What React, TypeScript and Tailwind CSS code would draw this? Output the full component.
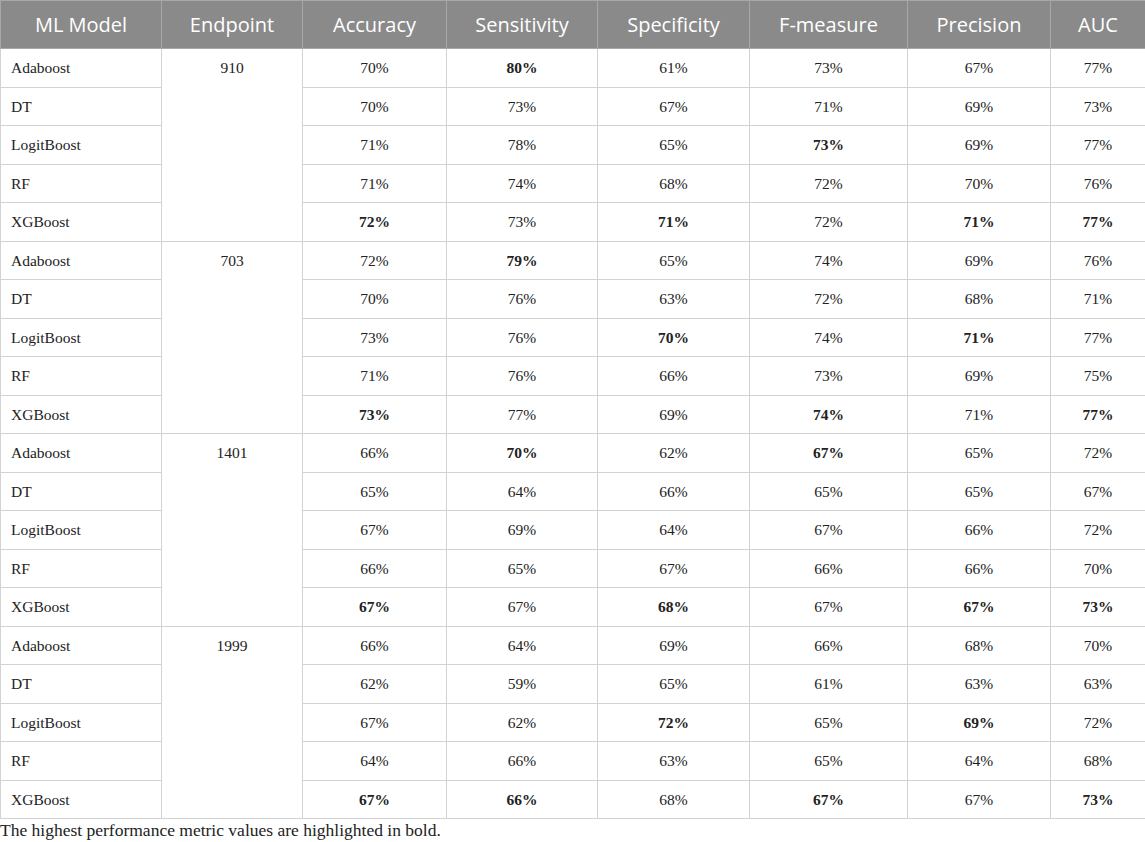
type Row = { model: string; vals: string[]; bold: number[] };

const groups: { endpoint: string; rows: Row[] }[] = [
  {
    endpoint: "910",
    rows: [
      { model: "Adaboost", vals: ["70%", "80%", "61%", "73%", "67%", "77%"], bold: [1] },
      { model: "DT", vals: ["70%", "73%", "67%", "71%", "69%", "73%"], bold: [] },
      { model: "LogitBoost", vals: ["71%", "78%", "65%", "73%", "69%", "77%"], bold: [3] },
      { model: "RF", vals: ["71%", "74%", "68%", "72%", "70%", "76%"], bold: [] },
      { model: "XGBoost", vals: ["72%", "73%", "71%", "72%", "71%", "77%"], bold: [0, 2, 4, 5] },
    ],
  },
  {
    endpoint: "703",
    rows: [
      { model: "Adaboost", vals: ["72%", "79%", "65%", "74%", "69%", "76%"], bold: [1] },
      { model: "DT", vals: ["70%", "76%", "63%", "72%", "68%", "71%"], bold: [] },
      { model: "LogitBoost", vals: ["73%", "76%", "70%", "74%", "71%", "77%"], bold: [2, 4] },
      { model: "RF", vals: ["71%", "76%", "66%", "73%", "69%", "75%"], bold: [] },
      { model: "XGBoost", vals: ["73%", "77%", "69%", "74%", "71%", "77%"], bold: [0, 3, 5] },
    ],
  },
  {
    endpoint: "1401",
    rows: [
      { model: "Adaboost", vals: ["66%", "70%", "62%", "67%", "65%", "72%"], bold: [1, 3] },
      { model: "DT", vals: ["65%", "64%", "66%", "65%", "65%", "67%"], bold: [] },
      { model: "LogitBoost", vals: ["67%", "69%", "64%", "67%", "66%", "72%"], bold: [] },
      { model: "RF", vals: ["66%", "65%", "67%", "66%", "66%", "70%"], bold: [] },
      { model: "XGBoost", vals: ["67%", "67%", "68%", "67%", "67%", "73%"], bold: [0, 2, 4, 5] },
    ],
  },
  {
    endpoint: "1999",
    rows: [
      { model: "Adaboost", vals: ["66%", "64%", "69%", "66%", "68%", "70%"], bold: [] },
      { model: "DT", vals: ["62%", "59%", "65%", "61%", "63%", "63%"], bold: [] },
      { model: "LogitBoost", vals: ["67%", "62%", "72%", "65%", "69%", "72%"], bold: [2, 4] },
      { model: "RF", vals: ["64%", "66%", "63%", "65%", "64%", "68%"], bold: [] },
      { model: "XGBoost", vals: ["67%", "66%", "68%", "67%", "67%", "73%"], bold: [0, 1, 3, 5] },
    ],
  },
];

const headers = ["ML Model", "Endpoint", "Accuracy", "Sensitivity", "Specificity", "F-measure", "Precision", "AUC"];
const widths = ["w-[161px]", "w-[141px]", "w-[144px]", "w-[151px]", "w-[152px]", "w-[158px]", "w-[143px]", "w-[95px]"];

export default function App() {
  return (
    <div className="w-[1145px] bg-white text-[#222] [font-family:'Liberation_Serif',serif]">
      <table className="w-full table-fixed border-collapse">
        <colgroup>
          {widths.map((w, i) => (
            <col key={i} className={w} />
          ))}
        </colgroup>
        <thead>
          <tr className="h-[48px] bg-[#8a8a8a]">
            {headers.map((h) => (
              <th
                key={h}
                className="border border-[#a8a8a8] text-center text-[20px] font-normal text-white [font-family:'Open_Sans',sans-serif]"
              >
                {h}
              </th>
            ))}
          </tr>
        </thead>
        <tbody>
          {groups.map((g) =>
            g.rows.map((r, ri) => (
              <tr key={g.endpoint + r.model} className="h-[38.5px] text-[15.5px]">
                <td className="border border-[#d3d3d3] pl-[10px] text-left">{r.model}</td>
                {ri === 0 && (
                  <td rowSpan={5} className="border border-[#d3d3d3] pt-[7px] text-center align-top">
                    {g.endpoint}
                  </td>
                )}
                {r.vals.map((v, vi) => (
                  <td
                    key={vi}
                    className={
                      "border border-[#d3d3d3] text-center" + (r.bold.includes(vi) ? " font-bold" : "")
                    }
                  >
                    {v}
                  </td>
                ))}
              </tr>
            ))
          )}
        </tbody>
      </table>
      <p className="pt-[1px] text-[17.5px] leading-[20px] text-[#222]">
        The highest performance metric values are highlighted in bold.
      </p>
    </div>
  );
}
